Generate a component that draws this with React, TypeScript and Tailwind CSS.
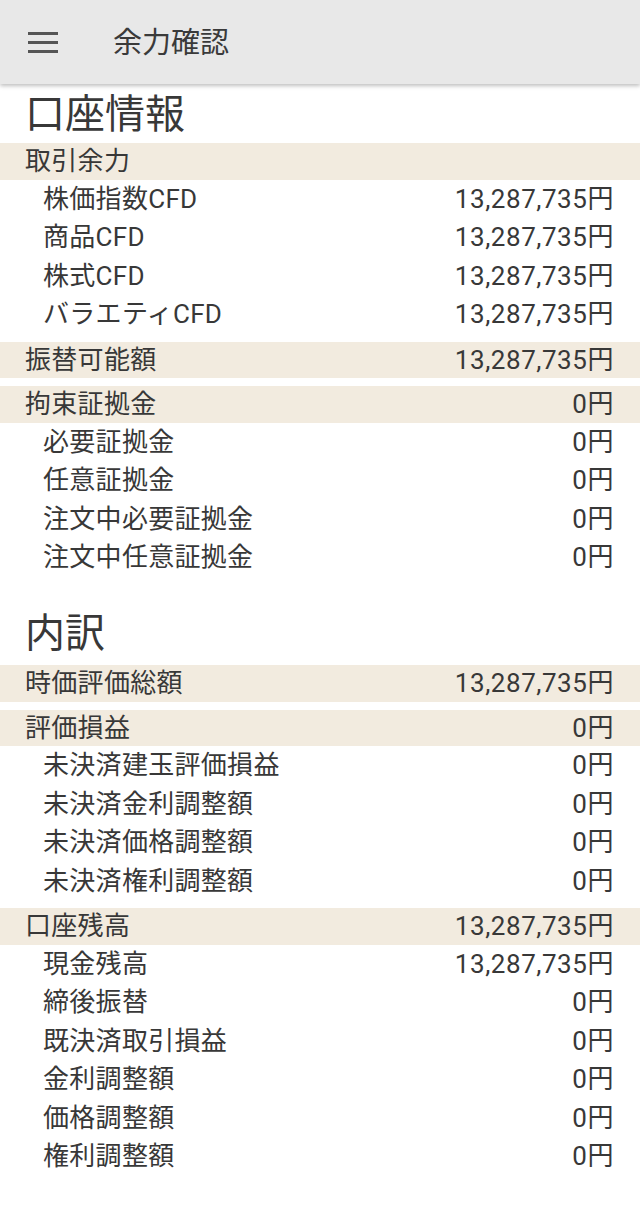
import React from 'react'

type Group = {
  label: string
  value?: string
  rows?: [string, string][]
}

const BIG = '13,287,735円'
const ZERO = '0円'

const accountInfo: Group[] = [
  {
    label: '取引余力',
    rows: [
      ['株価指数CFD', BIG],
      ['商品CFD', BIG],
      ['株式CFD', BIG],
      ['バラエティCFD', BIG],
    ],
  },
  { label: '振替可能額', value: BIG },
  {
    label: '拘束証拠金',
    value: ZERO,
    rows: [
      ['必要証拠金', ZERO],
      ['任意証拠金', ZERO],
      ['注文中必要証拠金', ZERO],
      ['注文中任意証拠金', ZERO],
    ],
  },
]

const breakdown: Group[] = [
  { label: '時価評価総額', value: BIG },
  {
    label: '評価損益',
    value: ZERO,
    rows: [
      ['未決済建玉評価損益', ZERO],
      ['未決済金利調整額', ZERO],
      ['未決済価格調整額', ZERO],
      ['未決済権利調整額', ZERO],
    ],
  },
  {
    label: '口座残高',
    value: BIG,
    rows: [
      ['現金残高', BIG],
      ['締後振替', ZERO],
      ['既決済取引損益', ZERO],
      ['金利調整額', ZERO],
      ['価格調整額', ZERO],
      ['権利調整額', ZERO],
    ],
  },
]

function GroupBlock({ group }: { group: Group }) {
  return (
    <div className="flex flex-col">
      <div className="flex h-[36.5px] items-center justify-between bg-[#f2ebdf] pl-[25px] pr-[26px]">
        <span className="tracking-[0.3px]">{group.label}</span>
        {group.value && <span className="tracking-[0.55px]">{group.value}</span>}
      </div>
      {group.rows?.map(([label, value]) => (
        <div key={label} className="flex h-[38.5px] items-center justify-between pl-[43px] pr-[26px]">
          <span className="tracking-[0.3px]">{label}</span>
          <span className="tracking-[0.55px]">{value}</span>
        </div>
      ))}
    </div>
  )
}

export default function App() {
  return (
    <div
      className="min-h-[1205px] w-[640px] bg-white text-[26px] leading-none text-[#383838]"
      style={{ fontFamily: 'Roboto, "Noto Sans CJK JP", sans-serif' }}
    >
      {/* App bar */}
      <header className="relative z-10 flex h-[84px] items-center bg-[#e8e8e8] shadow-[0_2px_4px_rgba(0,0,0,0.25)]">
        <div className="ml-[28px] flex w-[30px] flex-col gap-[6px]">
          <span className="h-[3px] bg-[#555]" />
          <span className="h-[3px] bg-[#555]" />
          <span className="h-[3px] bg-[#555]" />
        </div>
        <h1 className="ml-[55px] pt-[2px] text-[29px] text-[#3a3a3a]">余力確認</h1>
      </header>

      {/* 口座情報 */}
      <h2 className="flex h-[59px] items-center pt-[3px] pl-[25px] text-[40px]">口座情報</h2>
      <div className="flex flex-col gap-2">
        {accountInfo.map((g) => (
          <GroupBlock key={g.label} group={g} />
        ))}
      </div>

      {/* 内訳 */}
      <h2 className="flex h-[88.5px] items-center pt-[26px] pl-[25px] text-[40px]">内訳</h2>
      <div className="flex flex-col gap-2">
        {breakdown.map((g) => (
          <GroupBlock key={g.label} group={g} />
        ))}
      </div>
    </div>
  )
}
